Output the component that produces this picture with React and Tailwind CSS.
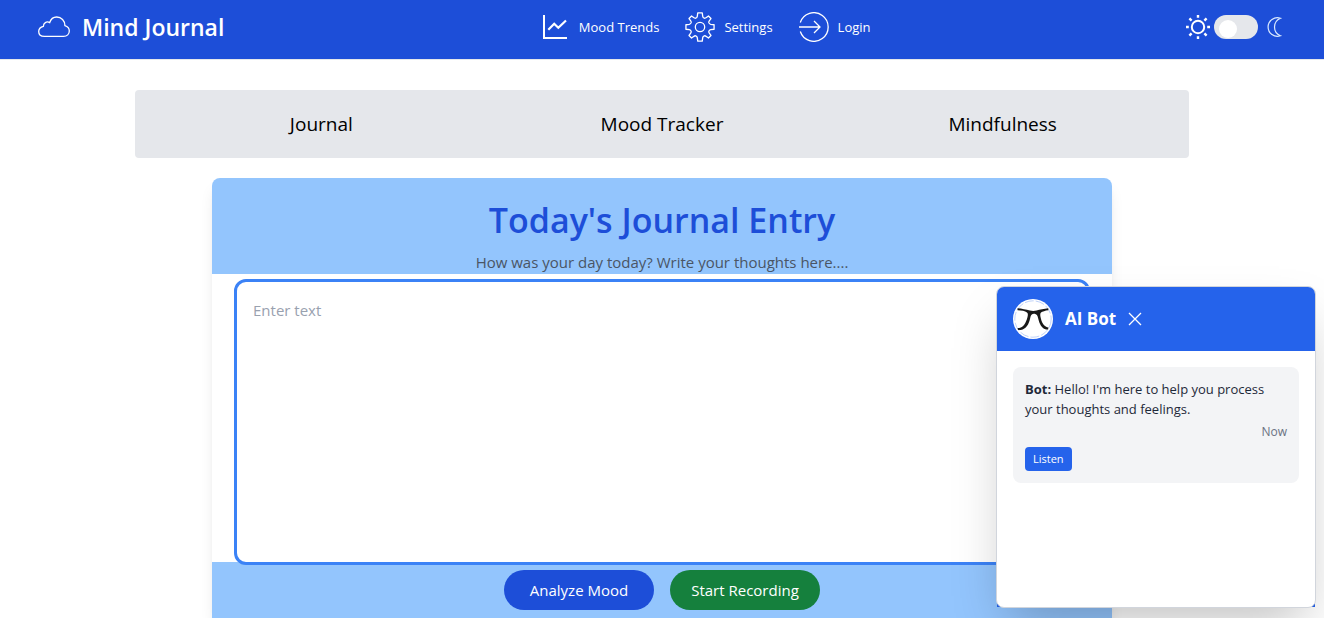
function CloudIcon() {
  return (
    <svg viewBox="0 0 32 22" className="h-[22px] w-8" fill="none" stroke="currentColor" strokeWidth="1.3" aria-hidden="true">
      <path d="M6.5 20.4H25.500C29 20.400 31.300 18 31.300 15C31.300 12.100 29.400 10.300 26.900 9.600C27 4.600 23.300 1 18.700 1C15.200 1 12.700 3.200 11.700 6.600C8.500 4.900 5.400 7 5.400 10.300C2.500 11 0.700 13 0.700 15.500C0.700 18.400 3 20.400 6.500 20.400Z" />
    </svg>
  );
}

function ChartIcon() {
  return (
    <svg viewBox="0 0 30 30" className="size-[30px]" fill="none" stroke="currentColor" strokeWidth="2" aria-hidden="true">
      <path d="M4 3V26H27" />
      <path strokeWidth="2.2" d="M8.300 17.700L14.200 11.800L18.300 15.800L26 8.500" />
    </svg>
  );
}

function GearIcon() {
  return (
    <svg viewBox="0 0 32 32" className="size-[30px]" fill="none" stroke="currentColor" strokeWidth="1.4" strokeLinejoin="round" aria-hidden="true">
      <path d="M13.6 1H18.4L18.9 4.600Q19.200 6.200 20.600 6.600Q21.600 6.800 22.800 5.900L25 4.300L27.700 7L26.100 9.200Q25.200 10.400 25.400 11.400Q25.800 12.800 27.400 13.100L31 13.600V18.400L27.400 18.900Q25.800 19.200 25.400 20.600Q25.200 21.600 26.100 22.800L27.700 25L25 27.700L22.800 26.100Q21.600 25.200 20.600 25.400Q19.200 25.800 18.900 27.400L18.400 31H13.600L13.100 27.400Q12.800 25.800 11.400 25.400Q10.400 25.200 9.200 26.100L7 27.700L4.300 25L5.900 22.800Q6.800 21.600 6.600 20.600Q6.200 19.200 4.600 18.900L1 18.400V13.600L4.600 13.100Q6.200 12.800 6.600 11.400Q6.800 10.400 5.900 9.200L4.300 7L7 4.300L9.200 5.900Q10.400 6.800 11.400 6.600Q12.800 6.200 13.100 4.600Z" />
      <circle cx="16" cy="16" r="5" />
    </svg>
  );
}

function LoginIcon() {
  return (
    <svg viewBox="0 0 30 30" className="size-[30px]" fill="none" stroke="currentColor" strokeWidth="1.3" aria-hidden="true">
      <path d="M1.300 10.500A14.300 14.300 0 1 1 1.300 19.500" />
      <path d="M0 15H20.500M15 9L21 15L15 21" />
    </svg>
  );
}

const navLinks = [
  { label: "Mood Trends", Icon: ChartIcon },
  { label: "Settings", Icon: GearIcon },
  { label: "Login", Icon: LoginIcon },
];

const tabs = ["Journal", "Mood Tracker", "Mindfulness"];

function SunIcon() {
  return (
    <svg viewBox="0 0 24 24" className="size-6 text-white" fill="none" stroke="currentColor" aria-hidden="true">
      <circle cx="12" cy="12" r="6.2" strokeWidth="2" />
      <path
        strokeWidth="2.4"
        d="M12 0v2.800M12 21.200V24M0 12h2.800M21.200 12H24M3.400 3.400l2.200 2.200M18.400 18.400l2.200 2.200M3.400 20.600l2.200-2.200M18.400 5.600l2.200-2.200"
      />
    </svg>
  );
}

function MoonIcon() {
  return (
    <svg viewBox="0 0 16 20" className="h-5 w-4 text-blue-100" fill="none" stroke="currentColor" strokeWidth="1.2" aria-hidden="true">
      <path d="M14.4 1.200A9.300 9.300 0 1 0 14.400 18.800C10.900 17.300 8.500 14 8.500 10S10.900 2.700 14.400 1.200Z" />
    </svg>
  );
}

function GlassesAvatar() {
  return (
    <svg viewBox="0 0 40 40" className="size-10" aria-hidden="true">
      <circle cx="20" cy="20" r="20" fill="#fff" />
      <circle cx="20" cy="20" r="18.2" fill="none" stroke="#93b4f5" strokeWidth="0.6" strokeDasharray="9 2" />
      <path
        fill="#181818"
        d="M4.5 9.3C9 9.6 13 10.6 17 11.6C19 12.2 21.500 12.200 23.500 11.600C27 10.500 31 9.600 35.200 9.200L35.400 11.200C32 11.600 29.600 12.400 28 13.600C26.800 14.800 27.200 17 28 20C29.200 24.500 31.500 27.800 35.500 28.600L35 30.600C30 30.600 27.200 27 25.600 21C24.800 18 24.600 16 22.800 15.200C21.300 14.600 19.800 14.700 18.800 15.400C17.400 16.300 17.500 18.400 16.600 21.400C14.800 27.400 11.500 31.300 5 31L4.600 29C9.500 28.900 12 25.600 13.800 20.400C15 16.800 15.400 14.600 14 13.400C12 11.900 8.500 11.500 4.600 11.300Z"
      />
    </svg>
  );
}

function CloseIcon() {
  return (
    <svg viewBox="0 0 14 14" className="size-3.5" fill="none" stroke="currentColor" strokeWidth="1.3" aria-hidden="true">
      <path d="M1 1l12 12M13 1L1 13" />
    </svg>
  );
}

function Header() {
  return (
    <header className="flex h-[60px] items-center justify-between border-b border-gray-200 bg-[#1d4ed8] pr-[42px] pb-[5px] pl-[38px] text-white">
      <a href="#home" className="flex items-center gap-3">
        <CloudIcon />
        <span className="text-[23px] leading-7 font-semibold">Mind Journal</span>
      </a>
      <nav className="flex items-center gap-[26px]">
        {navLinks.map(({ label, Icon }) => (
          <a key={label} href={`#${label}`} className="flex items-center gap-[9px] text-[13px] leading-5">
            <Icon />
            {label}
          </a>
        ))}
      </nav>
      <div className="flex items-center gap-2">
        <label className="flex items-center gap-1">
          <SunIcon />
          <input
            type="checkbox"
            role="switch"
            aria-label="Dark mode"
            className="h-6 w-11 appearance-none rounded-full bg-gray-200 before:mt-[5px] before:ml-[5px] before:block before:size-[18px] before:rounded-full before:bg-white"
          />
        </label>
        <MoonIcon />
      </div>
    </header>
  );
}

function ChatPanel() {
  return (
    <aside aria-label="AI Bot" className="fixed right-2 bottom-[10px] isolate w-80">
      <div className="absolute inset-px -z-10 rounded-t-lg bg-[#2563eb]" />
      <div className="overflow-hidden rounded-lg border border-gray-300 bg-white shadow-2xl">
        <div className="flex h-16 items-center gap-3 bg-[#2563eb] px-4 text-white">
          <GlassesAvatar />
          <h2 className="text-[17px] leading-7 font-bold">AI Bot</h2>
          <button type="button" aria-label="Close chat">
            <CloseIcon />
          </button>
        </div>
        <div className="h-64 p-4">
          <div className="rounded-lg bg-gray-100 p-3 text-[13px] leading-5 text-gray-800">
            <p>
              <strong>Bot:</strong> Hello! I'm here to help you process your thoughts and feelings.
            </p>
            <p className="mt-[5px] text-right text-[12px] leading-4 text-gray-500">Now</p>
            <button type="button" className="mt-[7px] block h-6 rounded-sm bg-[#2563eb] px-2 text-[11px] leading-4 font-medium text-white">
              Listen
            </button>
          </div>
        </div>
      </div>
    </aside>
  );
}

export default function App() {
  return (
    <div className="flex min-h-screen flex-col bg-white font-['Segoe_UI','Open_Sans',sans-serif]">
      <Header />
      <main className="flex flex-1 flex-col items-center pt-[30px]">
        <nav className="grid h-[68px] w-4/5 max-w-[1054px] grid-cols-3 items-center rounded-sm bg-gray-200 px-4">
          {tabs.map((tab) => (
            <button key={tab} type="button" className="px-4 text-[19px] leading-7 text-black">
              {tab}
            </button>
          ))}
        </nav>
        <section className="mt-5 flex w-full max-w-[900px] flex-1 flex-col rounded-t-lg bg-white shadow-lg">
          <div className="flex h-24 flex-col items-center rounded-t-lg bg-[#93c5fd] pt-5 text-center">
            <h1 className="text-[34px] leading-11 font-semibold text-[#1d4ed8]">Today's Journal Entry</h1>
            <label htmlFor="entry" className="mt-2 text-[15px] leading-6 text-gray-600">
              How was your day today? Write your thoughts here....
            </label>
          </div>
          <div className="relative px-[22px] pt-[5px]">
            <textarea
              id="entry"
              placeholder="Enter text"
              className="block h-[286px] w-full resize-none rounded-xl border-3 border-[#3b82f6] bg-white px-4 py-4 text-[15px] leading-6 outline-none placeholder:text-gray-400"
            />
          </div>
          <div className="-mt-[3px] flex flex-1 items-start justify-center gap-4 bg-[#93c5fd] pt-2 pb-2">
            <button type="button" className="h-10 w-[150px] rounded-full bg-[#1d4ed8] text-[15px] leading-6 text-white">
              Analyze Mood
            </button>
            <button type="button" className="h-10 w-[150px] rounded-full bg-[#15803d] text-[15px] leading-6 text-white">
              Start Recording
            </button>
          </div>
        </section>
      </main>
      <ChatPanel />
    </div>
  );
}
